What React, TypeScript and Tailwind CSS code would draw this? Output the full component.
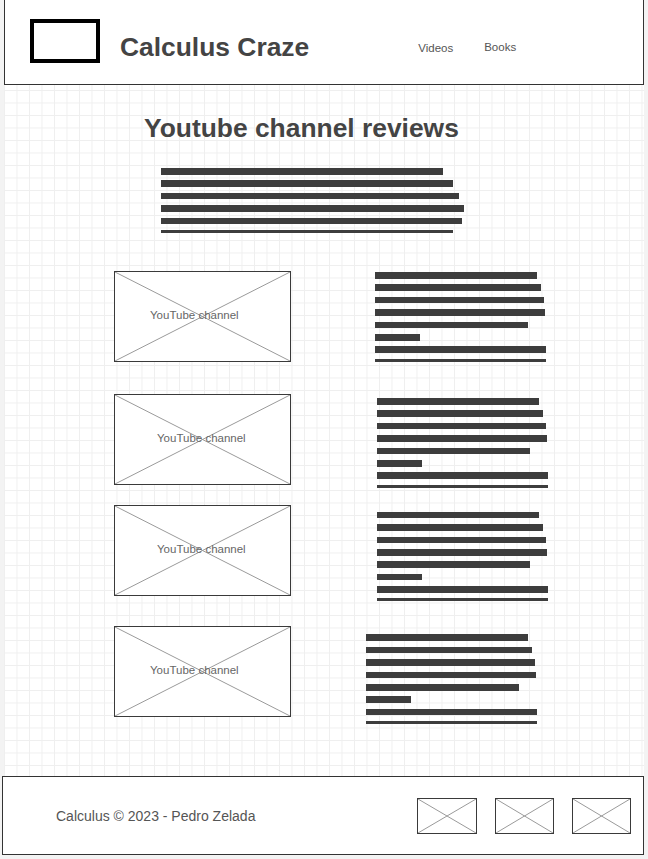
import React from 'react';

const font = { fontFamily: '"Liberation Sans", Arial, sans-serif' };

function CrossBox({ className, label, labelClass }: { className: string; label?: string; labelClass?: string }) {
  return (
    <div className={`relative shrink-0 border border-[#3a3a3a] bg-white ${className}`}>
      <svg className="absolute inset-0 h-full w-full" viewBox="0 0 100 100" preserveAspectRatio="none">
        <line x1="0" y1="0" x2="100" y2="100" stroke="#9a9a9a" strokeWidth="1" vectorEffect="non-scaling-stroke" />
        <line x1="100" y1="0" x2="0" y2="100" stroke="#9a9a9a" strokeWidth="1" vectorEffect="non-scaling-stroke" />
      </svg>
      {label && (
        <span className={`absolute top-1/2 -translate-y-1/2 text-[11.5px] leading-none text-[#666] whitespace-nowrap ${labelClass}`}>
          {label}
        </span>
      )}
    </div>
  );
}

function Bars({ widths }: { widths: number[] }) {
  return (
    <div className="flex flex-col gap-[5.8px]">
      {widths.map((w, i) => (
        <div
          key={i}
          className={i === widths.length - 1 ? 'h-[2.8px] bg-[#3d3d3d]' : 'h-[6.6px] bg-[#3d3d3d]'}
          style={{ width: w }}
        />
      ))}
    </div>
  );
}

const cardBars = [162, 166, 169, 170, 153, 45, 171, 171];

const cards = [
  { rowMt: 'mt-[38px]', label: 'ml-[35px]', textMl: 'ml-[84px]', textMt: 'mt-[1.3px]' },
  { rowMt: 'mt-[32px]', label: 'ml-[42px]', textMl: 'ml-[86px]', textMt: 'mt-[4.3px]' },
  { rowMt: 'mt-[20px]', label: 'ml-[42px]', textMl: 'ml-[86px]', textMt: 'mt-[7px]' },
  { rowMt: 'mt-[30px]', label: 'ml-[35px]', textMl: 'ml-[75px]', textMt: 'mt-[8.7px]' },
];

export default function App() {
  return (
    <div className="flex h-[859px] w-[648px] flex-col bg-[#f3f3f3]" style={font}>
      {/* header */}
      <header className="ml-[4px] flex h-[85px] w-[640px] shrink-0 items-start border-x border-b border-[#333] bg-white">
        <div className="ml-[25px] mt-[19px] h-[44px] w-[70px] border-[4px] border-black" />
        <h1 className="ml-[20px] mt-[32px] text-[26.4px] font-bold leading-[30px] text-[#444]">Calculus Craze</h1>
        <nav className="ml-[109px] mt-[41px] flex gap-[31px] text-[11.5px] leading-[14px] text-[#555]">
          <span>Videos</span>
          <span className="-mt-[1px]">Books</span>
        </nav>
      </header>

      {/* main */}
      <main className="ml-[4px] flex w-[640px] flex-1 flex-col bg-white [background-image:linear-gradient(to_right,#efefef_1px,transparent_1px),linear-gradient(to_bottom,#efefef_1px,transparent_1px)] [background-position:0_5px] [background-size:12.5px_12.5px]">
        <h2 className="ml-[140px] mt-[28px] text-[26.4px] font-bold leading-[30px] text-[#444]">
          Youtube channel reviews
        </h2>
        <div className="ml-[157px] mt-[25px]">
          <Bars widths={[282, 292, 298, 303, 301, 292]} />
        </div>

        {cards.map((c, i) => (
          <div key={i} className={`flex h-[91px] items-start ${c.rowMt}`}>
            <CrossBox className="ml-[110px] h-[91px] w-[177px]" label="YouTube channel" labelClass={c.label} />
            <div className={`${c.textMl} ${c.textMt}`}>
              <Bars widths={cardBars} />
            </div>
          </div>
        ))}
      </main>

      {/* footer */}
      <footer className="mb-[4px] ml-[2px] flex h-[79px] w-[642px] shrink-0 items-center border border-[#333] bg-white">
        <span className="ml-[53px] mt-[2px] text-[14px] text-[#555]">Calculus © 2023 - Pedro Zelada</span>
        <div className="ml-auto mr-[12px] flex gap-[18px]">
          <CrossBox className="h-[36px] w-[60px]" />
          <CrossBox className="h-[36px] w-[59px]" />
          <CrossBox className="h-[36px] w-[59px]" />
        </div>
      </footer>
    </div>
  );
}
